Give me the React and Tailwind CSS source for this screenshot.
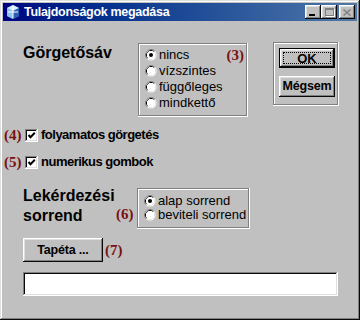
import React from "react";

const raised =
  "shadow-[inset_-1px_-1px_#0a0a0a,inset_1px_1px_#ffffff,inset_-2px_-2px_#808080,inset_2px_2px_#dfdfdf]";
const sunken =
  "shadow-[inset_-1px_-1px_#ffffff,inset_1px_1px_#808080,inset_-2px_-2px_#dfdfdf,inset_2px_2px_#0a0a0a]";
const etched =
  "shadow-[inset_-1px_-1px_#ffffff,inset_1px_1px_#808080,inset_-2px_-2px_#808080,inset_2px_2px_#ffffff]";

function Radio({ checked }) {
  return (
    <svg width="12" height="12" viewBox="0 0 12 12" className="shrink-0">
      <circle cx="6" cy="6" r="5.5" fill="#ffffff" />
      <path d="M2.11 9.89 A5.5 5.5 0 0 1 9.89 2.11" fill="none" stroke="#808080" strokeWidth="1" />
      <path d="M2.82 9.18 A4.5 4.5 0 0 1 9.18 2.82" fill="none" stroke="#0a0a0a" strokeWidth="1" />
      <path d="M9.18 2.82 A4.5 4.5 0 0 1 2.82 9.18" fill="none" stroke="#dfdfdf" strokeWidth="1" />
      <circle cx="6" cy="6" r="4" fill="#ffffff" />
      {checked && <circle cx="6" cy="6" r="2" fill="#000000" />}
    </svg>
  );
}

function Check() {
  return (
    <div className={`w-[13px] h-[13px] bg-white shrink-0 ${sunken} flex items-center justify-center`}>
      <svg width="9" height="9" viewBox="0 0 9 9">
        <polyline points="1.5,4 3.5,6.2 7.8,1.8" fill="none" stroke="#000" strokeWidth="2" />
      </svg>
    </div>
  );
}

function Note({ children, className = "" }) {
  return (
    <span
      className={`text-[15px] font-bold leading-[18px] text-[#7a1010] ${className}`}
      style={{ fontFamily: '"Liberation Serif", "Times New Roman", serif' }}
    >
      {children}
    </span>
  );
}

function TitleButton({ children }) {
  return (
    <div className={`w-[16px] h-[14px] bg-[#c0c0c0] ${raised} flex items-center justify-center`}>
      {children}
    </div>
  );
}

export default function App() {
  return (
    <div
      className={`w-[360px] h-[320px] bg-[#c0c0c0] p-[3px] shadow-[inset_-1px_-1px_#0a0a0a,inset_1px_1px_#dfdfdf,inset_-2px_-2px_#808080,inset_2px_2px_#ffffff]`}
      style={{ fontFamily: '"Liberation Sans", Arial, sans-serif' }}
    >
      {/* Title bar */}
      <div className="h-[18px] flex items-center bg-gradient-to-r from-[#000080] to-[#5078a8] pl-[2px] pr-[2px]">
        <svg width="16" height="16" viewBox="0 0 16 16" className="shrink-0">
          <polygon points="8,1 14,4 14,12 8,15 2,12 2,4" fill="#6aa8e0" />
          <polygon points="8,1 14,4 8,7 2,4" fill="#d8ecff" />
          <polygon points="8,7 14,4 14,12 8,15" fill="#2c5fb0" />
          <polygon points="2,4 8,7 8,15 2,12" fill="#8cc4f0" />
          <polyline points="8,2 8,14" stroke="#ffffff" strokeWidth="1" />
          <polyline points="3,8 13,8" stroke="#ffffff" strokeWidth="1" />
        </svg>
        <span className="ml-[3px] text-white font-bold text-[12.5px] tracking-[-0.3px] leading-none">
          Tulajdonságok megadása
        </span>
        <div className="ml-auto flex items-center">
          <TitleButton>
            <div className="w-[6px] h-[2px] bg-black mt-[6px] mr-[3px]" />
          </TitleButton>
          <TitleButton>
            <div className="w-[9px] h-[8px] border border-[#808080] border-t-2 shadow-[1px_1px_#ffffff]" />
          </TitleButton>
          <div className="ml-[2px]">
            <TitleButton>
              <svg width="8" height="7" viewBox="0 0 8 7">
                <path d="M0.5 0.5 L7.5 6.5 M7.5 0.5 L0.5 6.5" stroke="#808080" strokeWidth="1.5" />
              </svg>
            </TitleButton>
          </div>
        </div>
      </div>

      {/* Section 1 */}
      <div className="flex pl-[20px] mt-[21px]">
        <div className="w-[115px] mt-[2px] text-[16px] font-bold leading-[18px] text-black">
          Görgetősáv
        </div>
        <div className={`w-[110px] h-[74px] mt-[1px] ${etched} pt-[4px] pl-[7px] pr-[4px] text-[13px] text-black`}>
          {[
            ["nincs", true],
            ["vízszintes", false],
            ["függőleges", false],
            ["mindkettő", false],
          ].map(([label, on], i) => (
            <div key={label} className="h-[16px] flex items-center">
              <Radio checked={on} />
              <span className="ml-[2px] leading-[16px]">{label}</span>
              {i === 0 && <Note className="ml-auto">(3)</Note>}
            </div>
          ))}
        </div>
        <div className={`ml-[25px] w-[66px] h-[64px] ${etched} pt-[6px] pl-[6px] flex flex-col gap-[8px]`}>
          <div className="w-[56px] h-[20px] bg-black p-[1px]">
            <div className={`w-full h-full bg-[#c0c0c0] ${raised} flex items-center justify-center p-[3px]`}>
              <div className="w-full h-full border border-dotted border-black flex items-center justify-center text-[13px] font-bold leading-none">
                OK
              </div>
            </div>
          </div>
          <div className={`w-[56px] h-[21px] bg-[#c0c0c0] ${raised} flex items-center justify-center text-[12.5px] tracking-[-0.2px] font-bold leading-none`}>
            Mégsem
          </div>
        </div>
      </div>

      {/* Checkboxes */}
      <div className="mt-[10px] pl-[1px] flex flex-col gap-[11px]">
        <div className="h-[16px] flex items-center">
          <Note className="w-[19px]">(4)</Note>
          <div className="ml-[2px]"><Check /></div>
          <span className="ml-[3px] text-[13px] tracking-[-0.5px] font-bold">folyamatos görgetés</span>
        </div>
        <div className="h-[16px] flex items-center">
          <Note className="w-[19px]">(5)</Note>
          <div className="ml-[2px]"><Check /></div>
          <span className="ml-[3px] text-[13px] tracking-[-0.5px] font-bold">numerikus gombok</span>
        </div>
      </div>

      {/* Section 3 */}
      <div className="flex pl-[20px] mt-[16px]">
        <div className="w-[93px] text-[16px] font-bold leading-[20px] text-black">
          Lekérdezési
          <br />
          sorrend
        </div>
        <Note className="w-[21px] mt-[19px]">(6)</Note>
        <div className={`w-[113px] h-[41px] mt-[2px] ${etched} pt-[6px] pl-[7px] text-[13px] text-black`}>
          <div className="h-[14px] flex items-center">
            <Radio checked />
            <span className="ml-[2px] leading-[14px]">alap sorrend</span>
          </div>
          <div className="h-[14px] flex items-center">
            <Radio />
            <span className="ml-[2px] leading-[14px]">beviteli sorrend</span>
          </div>
        </div>
      </div>

      {/* Tapéta */}
      <div className="flex items-center pl-[20px] mt-[9px]">
        <div className={`w-[80px] h-[24px] bg-[#c0c0c0] ${raised} flex items-center justify-center text-[12.5px] tracking-[-0.2px] font-bold`}>
          Tapéta ...
        </div>
        <Note className="ml-[2px]">(7)</Note>
      </div>

      {/* Input */}
      <div className="pl-[20px] mt-[10px]">
        <div className={`w-[315px] h-[24px] bg-white ${sunken}`} />
      </div>
    </div>
  );
}
